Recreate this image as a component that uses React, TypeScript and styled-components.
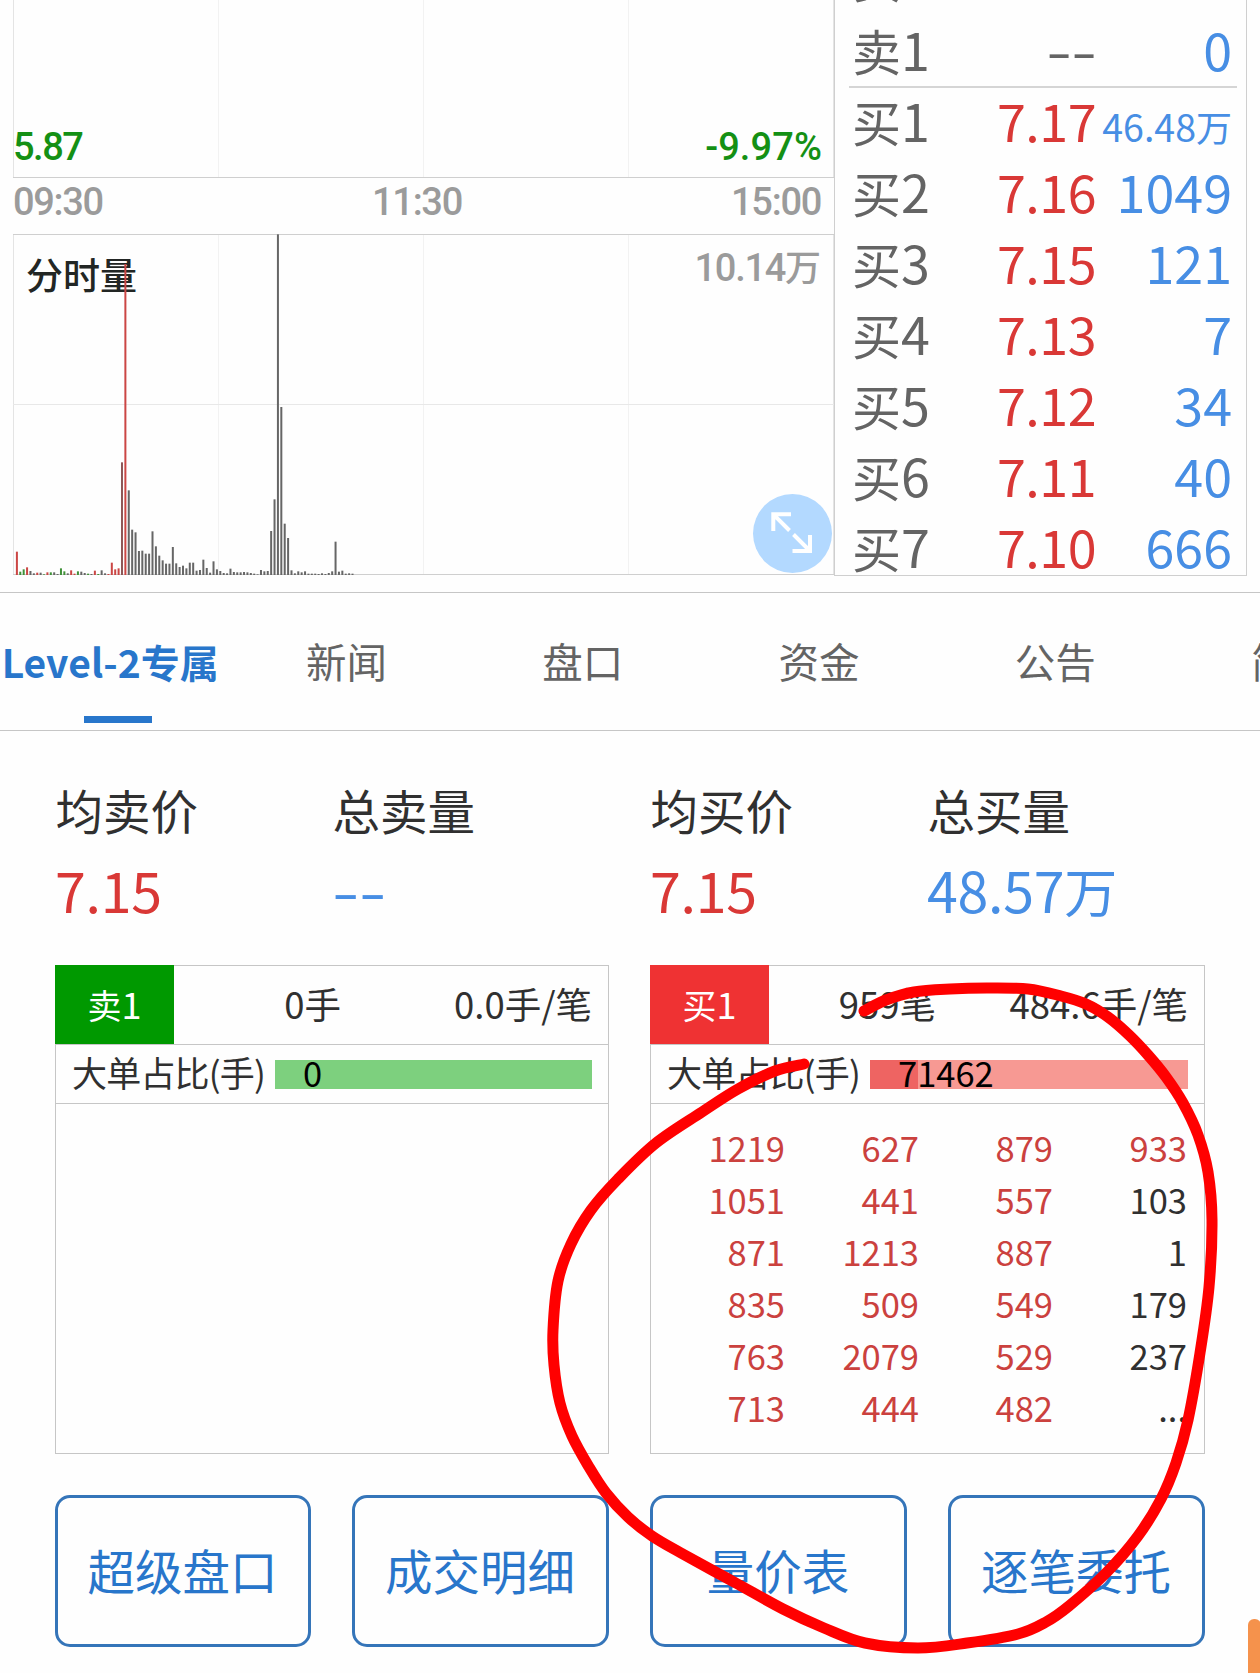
import React from "react";
import styled, { createGlobalStyle } from "styled-components";

const CJK = `"Noto Sans CJK SC", "Noto Sans", sans-serif`;
const DIN = `Roboto, "Noto Sans CJK SC", sans-serif`;

const c = {
  page: "#fefefe",
  line: "#cfcfcf",
  gray: "#646464",
  axis: "#9b9b9b",
  ink: "#303030",
  up: "#d93836",
  down: "#149014",
  blue: "#478ee4",
  link: "#2876cb",
};

const Global = createGlobalStyle`
  html, body { margin: 0; padding: 0; background: ${c.page}; overflow: hidden; }
  * { box-sizing: border-box; }
`;

const Page = styled.div`
  position: relative;
  width: 1260px;
  height: 1673px;
  overflow: hidden;
  background: ${c.page};
  font-family: ${CJK};
  white-space: nowrap;
`;

/* ---------- intraday chart and order book ---------- */

const Market = styled.section`
  display: flex;
  height: 592px;
`;

const ChartColumn = styled.div`
  display: flex;
  flex-direction: column;
  width: 834px;
  padding-left: 13px;
  font: 500 38px/40px ${DIN};
  letter-spacing: -1.3px;
  color: ${c.axis};
`;

const Stack = styled.div<{ $h: number }>`
  display: grid;
  height: ${(p) => p.$h}px;
  > * {
    grid-area: 1 / 1;
  }
`;

const Plot = styled.svg`
  display: block;
`;

const PriceLabels = styled.div`
  display: flex;
  justify-content: space-between;
  align-items: flex-end;
  padding: 0 12px 11px 0;
  color: ${c.down};
`;

const Price = styled.span`
  letter-spacing: -1.5px;
`;

const Change = styled.span`
  letter-spacing: 0.1px;
`;

const TimeAxis = styled.div`
  display: flex;
  justify-content: space-between;
  height: 56px;
  padding: 4px 13px 0 0;
`;

const VolumeLabels = styled.div`
  display: flex;
  justify-content: space-between;
  padding: 13px 13px 0 13px;
`;

const VolumeName = styled.span`
  padding-top: 7px;
  font: 500 37px/40px ${CJK};
  letter-spacing: 0;
  color: #222624;
`;

const Unit = styled.span<{ $size: number }>`
  font-family: ${CJK};
  font-size: ${(p) => p.$size}px;
  line-height: 1;
  letter-spacing: 0;
`;

const ExpandButton = styled.button`
  align-self: end;
  justify-self: end;
  display: grid;
  place-items: center;
  width: 79px;
  height: 79px;
  margin: 0 2px 2px 0;
  padding: 0 3px 3px 0;
  border: 0;
  border-radius: 50%;
  background: #b3d9ff;
`;

const Book = styled.div`
  display: flex;
  flex-direction: column;
  justify-content: flex-end;
  width: 413px;
  height: 576px;
  padding: 0 9px 0 14px;
  border: 1px solid ${c.line};
  border-top: 0;
  overflow: hidden;
`;

const BookRow = styled.div`
  display: grid;
  grid-template-columns: 108px 136px 1fr;
  align-items: baseline;
  flex: none;
  height: 71px;
  padding: 0 5px 0 3px;
  font-size: 52px;
  line-height: 71px;
  color: ${c.gray};
  &:first-child {
    margin-bottom: 2px;
  }
  &:last-child {
    margin-bottom: -6px;
  }
`;

const BookLabel = styled.span`
  font-size: 52px;
`;

const BookPrice = styled.span<{ $up: boolean }>`
  text-align: right;
  letter-spacing: -0.5px;
  color: ${(p) => (p.$up ? c.up : c.gray)};
`;

const BookVolume = styled.span<{ $small?: boolean }>`
  justify-self: end;
  font-size: ${(p) => (p.$small ? 37.5 : 52)}px;
  color: ${c.blue};
`;

const Dashes = styled.span<{ $origin: string }>`
  display: inline-block;
  transform: scaleX(1.42);
  transform-origin: ${(p) => p.$origin} center;
`;

const BookDivider = styled.hr`
  flex: none;
  width: 100%;
  height: 2px;
  margin: 2px 0 -4px;
  border: 0;
  background: #d5d5d5;
`;

/* ---------- tabs ---------- */

const Tabs = styled.nav`
  display: flex;
  height: 139px;
  border-top: 1px solid #c6c6c6;
  border-bottom: 1px solid #c6c6c6;
`;

const Tab = styled.div<{ $active?: boolean }>`
  display: flex;
  flex: none;
  flex-direction: column;
  align-items: center;
  width: 236.3px;
  padding: 44px 16px 0 0;
  font-size: ${(p) => (p.$active ? 39 : 40.5)}px;
  font-weight: ${(p) => (p.$active ? 700 : 400)};
  line-height: 48px;
  color: ${(p) => (p.$active ? c.link : c.gray)};
  &::after {
    content: "";
    width: 68px;
    height: 7px;
    margin: 31px 0 0 16px;
    background: ${(p) => (p.$active ? c.link : "transparent")};
  }
`;

/* ---------- level-2 summary ---------- */

const Level2 = styled.section`
  display: flex;
  flex-direction: column;
  padding: 49px 55px 0;
`;

const Summary = styled.div`
  display: grid;
  grid-template-columns: 277px 318px 277px 1fr;
`;

const Stat = styled.div`
  display: flex;
  flex-direction: column;
  gap: 14px;
`;

const StatLabel = styled.span`
  padding-left: 0.5px;
  font-size: 47.5px;
  line-height: 60px;
  color: ${c.ink};
`;

const StatValue = styled.span<{ $blue?: boolean }>`
  height: 70px;
  font-size: 55.5px;
  line-height: 70px;
  letter-spacing: -0.3px;
  color: ${(p) => (p.$blue ? c.blue : c.up)};
`;

const Panels = styled.div`
  display: grid;
  grid-template-columns: 554px 555px;
  gap: 41px;
  margin-top: 41px;
`;

const Panel = styled.div`
  display: flex;
  flex-direction: column;
  height: 489px;
  border: 1px solid #c6c6c6;
`;

const PanelHead = styled.div`
  display: flex;
  align-items: center;
  flex: none;
  height: 79px;
  padding-right: 16px;
  border-bottom: 1px solid #c6c6c6;
  font-size: 36.5px;
  line-height: 76px;
  color: ${c.ink};
`;

const Badge = styled.span<{ $bg: string }>`
  align-self: stretch;
  width: 119px;
  height: 79px;
  margin: -1px 0 0 -1px;
  padding-bottom: 3px;
  font-size: 36px;
  text-align: center;
  background: ${(p) => p.$bg};
  color: #fff;
`;

const HeadCount = styled.span`
  width: 167px;
  height: 78px;
  text-align: right;
`;

const HeadAverage = styled.span`
  flex: 1;
  height: 78px;
  text-align: right;
`;

const Ratio = styled.div`
  display: flex;
  align-items: center;
  flex: none;
  height: 59px;
  padding: 0 16px;
  border-bottom: 1px solid #c6c6c6;
  font-size: 35px;
  color: ${c.ink};
`;

const RatioLabel = styled.span`
  width: 203px;
  height: 58px;
  line-height: 54px;
  letter-spacing: -0.8px;
`;

const RatioBar = styled.div<{ $rest: string; $fill: string; $share: number }>`
  flex: 1;
  height: 29px;
  padding-left: 28px;
  font-size: 34.5px;
  line-height: 24px;
  color: #000;
  background: linear-gradient(
    to right,
    ${(p) => p.$fill} ${(p) => p.$share}%,
    ${(p) => p.$rest} ${(p) => p.$share}%
  );
`;

const Orders = styled.div`
  display: grid;
  grid-template-columns: repeat(4, 134px);
  grid-auto-rows: 52px;
  padding-top: 17px;
  font-size: 34.5px;
  line-height: 53px;
  text-align: right;
`;

const Order = styled.span<{ $big: boolean }>`
  color: ${(p) => (p.$big ? "#cb413e" : c.ink)};
`;

const Actions = styled.div`
  display: grid;
  grid-template-columns: 256px 257px 257px 257px;
  gap: 41px;
  margin-top: 41px;
`;

const Action = styled.button`
  height: 152px;
  padding: 0 1px 3px 0;
  border: 3px solid #3575b9;
  border-radius: 15px;
  background: transparent;
  font: 400 47.5px/60px ${CJK};
  color: ${c.link};
`;

/* ---------- overlays ---------- */

const Markup = styled.svg`
  position: absolute;
  inset: 0;
  pointer-events: none;
`;

const FloatingHandle = styled.div`
  position: absolute;
  left: 1248px;
  top: 1619px;
  width: 13px;
  height: 60px;
  border-radius: 6px 6px 0 0;
  background: #f5924c;
`;

/* ---------- data ---------- */

const heights = [
  70, 10, 17, 23, 12, 5, 7, 7, 2, 8, 8, 8, 3, 20, 11, 5, 14, 4, 11, 10, 6, 4, 3, 13, 3, 14, 5, 3, 37, 17, 20, 338, 933,
  254, 136, 128, 72, 73, 64, 64, 131, 86, 58, 44, 34, 34, 84, 35, 24, 28, 20, 37, 37, 13, 15, 46, 21, 7, 41, 17, 12, 6,
  5, 19, 9, 8, 8, 9, 8, 6, 4, 2, 15, 11, 12, 132, 227, 1022, 504, 154, 111, 14, 5, 11, 8, 11, 4, 4, 4, 3, 5, 3, 6, 11,
  100, 10, 13, 4, 5, 4,
];
const rising = new Set([0, 3, 6, 9, 16, 17, 23, 27, 28, 29, 30, 32]);
const falling = new Set([1, 2, 8, 10, 13, 14, 18, 21, 24]);

const barColor = (i: number) =>
  rising.has(i) ? "#cb4644" : falling.has(i) ? "#3f9138" : i === 31 ? "#8d5656" : "#666";

const book: [string, string, string, string?][] = [
  ["卖2", "--", "0"],
  ["卖1", "--", "0"],
  ["买1", "7.17", "46.48", "万"],
  ["买2", "7.16", "1049"],
  ["买3", "7.15", "121"],
  ["买4", "7.13", "7"],
  ["买5", "7.12", "34"],
  ["买6", "7.11", "40"],
  ["买7", "7.10", "666"],
];

const orders = [
  "1219", "627", "879", "933",
  "1051", "441", "557", "103",
  "871", "1213", "887", "1",
  "835", "509", "549", "179",
  "763", "2079", "529", "237",
  "713", "444", "482", "...",
];

const stroke: [number, number][] = [
  [864, 1011], [886, 1000], [914, 992], [950, 989], [987, 988], [1028, 989], [1061, 996], [1086, 1004], [1108, 1017],
  [1129, 1035], [1148, 1055], [1166, 1077], [1183, 1103], [1198, 1135], [1208, 1172], [1212, 1220], [1209, 1287],
  [1200, 1353], [1188, 1420], [1176, 1463], [1161, 1499], [1138, 1536], [1107, 1572], [1069, 1606], [1046, 1622],
  [1018, 1634], [967, 1643], [918, 1648], [865, 1643], [824, 1628], [783, 1609], [734, 1582], [681, 1553],
  [652, 1536], [628, 1517], [606, 1493], [589, 1467], [572, 1436], [560, 1403], [554, 1365], [553, 1330], [558, 1281],
  [571, 1244], [591, 1210], [618, 1179], [656, 1143], [702, 1112], [738, 1089], [775, 1071], [804, 1064],
];

/* Catmull-Rom spline through the sampled points. */
const smooth = (p: [number, number][]) =>
  p.slice(1).reduce((d, b, i) => {
    const a = p[i];
    const before = p[Math.max(i - 1, 0)];
    const after = p[Math.min(i + 2, p.length - 1)];
    return (
      d +
      ` C${a[0] + (b[0] - before[0]) / 6} ${a[1] + (b[1] - before[1]) / 6}` +
      ` ${b[0] - (after[0] - a[0]) / 6} ${b[1] - (after[1] - a[1]) / 6} ${b[0]} ${b[1]}`
    );
  }, `M${p[0][0]} ${p[0][1]}`);

const GridLines = ({ top, bottom }: { top: number; bottom: number }) => (
  <>
    {[0.5, 205.5, 410.5, 615.5, 820.5].map((x, i) => (
      <path key={x} d={`M${x} ${top}V${bottom}`} stroke={i % 4 ? "#f2f2f2" : "#e4e4e4"} />
    ))}
  </>
);

const Side = ({ badge, bg, count, average, big, rest, fill, share, list }: {
  badge: string; bg: string; count: string; average: string; big: string;
  rest: string; fill: string; share: number; list: string[];
}) => (
  <Panel>
    <PanelHead>
      <Badge $bg={bg}>
        <Unit $size={34}>{badge[0]}</Unit>
        {badge[1]}
      </Badge>
      <HeadCount>{count}</HeadCount>
      <HeadAverage>{average}</HeadAverage>
    </PanelHead>
    <Ratio>
      <RatioLabel>大单占比(手)</RatioLabel>
      <RatioBar $rest={rest} $fill={fill} $share={share}>{big}</RatioBar>
    </Ratio>
    <Orders>
      {list.map((n, i) => (
        <Order key={i} $big={Number(n) > 400}>{n}</Order>
      ))}
    </Orders>
  </Panel>
);

export default function App() {
  return (
    <Page>
      <Global />
      <Market>
        <ChartColumn>
          <Stack $h={178}>
            <Plot width="821" height="178">
              <GridLines top={0} bottom={178} />
              <path d="M0 177.5H821" stroke={c.line} />
            </Plot>
            <PriceLabels>
              <Price>5.87</Price>
              <Change>-9.97%</Change>
            </PriceLabels>
          </Stack>
          <TimeAxis>
            <span>09:30</span>
            <span>11:30</span>
            <span>15:00</span>
          </TimeAxis>
          <Stack $h={341}>
            <VolumeLabels>
              <VolumeName>分时量</VolumeName>
              <span>
                10.14<Unit $size={36}>万</Unit>
              </span>
            </VolumeLabels>
            <Plot width="821" height="341">
              <GridLines top={0} bottom={341} />
              <path d="M0 170.5H821" stroke="#e8e8e8" />
              <path d="M0 .5H821M0 340.5H821" stroke={c.line} />
              {heights.map((h, i) => (
                <rect
                  key={i}
                  x={2.9 + i * 3.39}
                  y={341 - h / 3}
                  width={2}
                  height={h / 3}
                  fill={barColor(i)}
                />
              ))}
            </Plot>
            <ExpandButton aria-label="expand">
              <svg width="42" height="42" viewBox="0 0 42 42" fill="none" stroke="#fff" strokeWidth="4">
                <path d="M21 3.3H3.3V20M3.3 3.3L19.5 19.5M23.5 23.5L39 39M40 24V40H22.5" />
              </svg>
            </ExpandButton>
          </Stack>
        </ChartColumn>
        <Book>
          {book.map(([label, price, volume, unit], i) => (
            <React.Fragment key={label}>
              <BookRow>
                <BookLabel>
                  <Unit $size={49}>{label[0]}</Unit>
                  {label[1]}
                </BookLabel>
                <BookPrice $up={price !== "--"}>
                  {price === "--" ? <Dashes $origin="right">--</Dashes> : price}
                </BookPrice>
                <BookVolume $small={!!unit}>
                  {volume}
                  {unit && <Unit $size={36}>{unit}</Unit>}
                </BookVolume>
              </BookRow>
              {i === 1 && <BookDivider />}
            </React.Fragment>
          ))}
        </Book>
      </Market>

      <Tabs>
        <Tab $active>Level-2专属</Tab>
        <Tab>新闻</Tab>
        <Tab>盘口</Tab>
        <Tab>资金</Tab>
        <Tab>公告</Tab>
        <Tab>简况</Tab>
      </Tabs>

      <Level2>
        <Summary>
          <Stat>
            <StatLabel>均卖价</StatLabel>
            <StatValue>7.15</StatValue>
          </Stat>
          <Stat>
            <StatLabel>总卖量</StatLabel>
            <StatValue $blue>
              <Dashes $origin="left">--</Dashes>
            </StatValue>
          </Stat>
          <Stat>
            <StatLabel>均买价</StatLabel>
            <StatValue>7.15</StatValue>
          </Stat>
          <Stat>
            <StatLabel>总买量</StatLabel>
            <StatValue $blue>
              48.57<Unit $size={53}>万</Unit>
            </StatValue>
          </Stat>
        </Summary>
        <Panels>
          <Side badge="卖1" bg="#009900" count="0手" average="0.0手/笔" big="0" rest="#7dd07e" fill="#7dd07e" share={0} list={[]} />
          <Side badge="买1" bg="#ef3233" count="959笔" average="484.6手/笔" big="71462" rest="#f79993" fill="#ee6462" share={15} list={orders} />
        </Panels>
        <Actions>
          <Action>超级盘口</Action>
          <Action>成交明细</Action>
          <Action>量价表</Action>
          <Action>逐笔委托</Action>
        </Actions>
      </Level2>

      <FloatingHandle />
      <Markup width="1260" height="1673">
        <path d={smooth(stroke)} fill="none" stroke="#ff0000" strokeWidth="11" strokeLinecap="round" strokeLinejoin="round" />
      </Markup>
    </Page>
  );
}
